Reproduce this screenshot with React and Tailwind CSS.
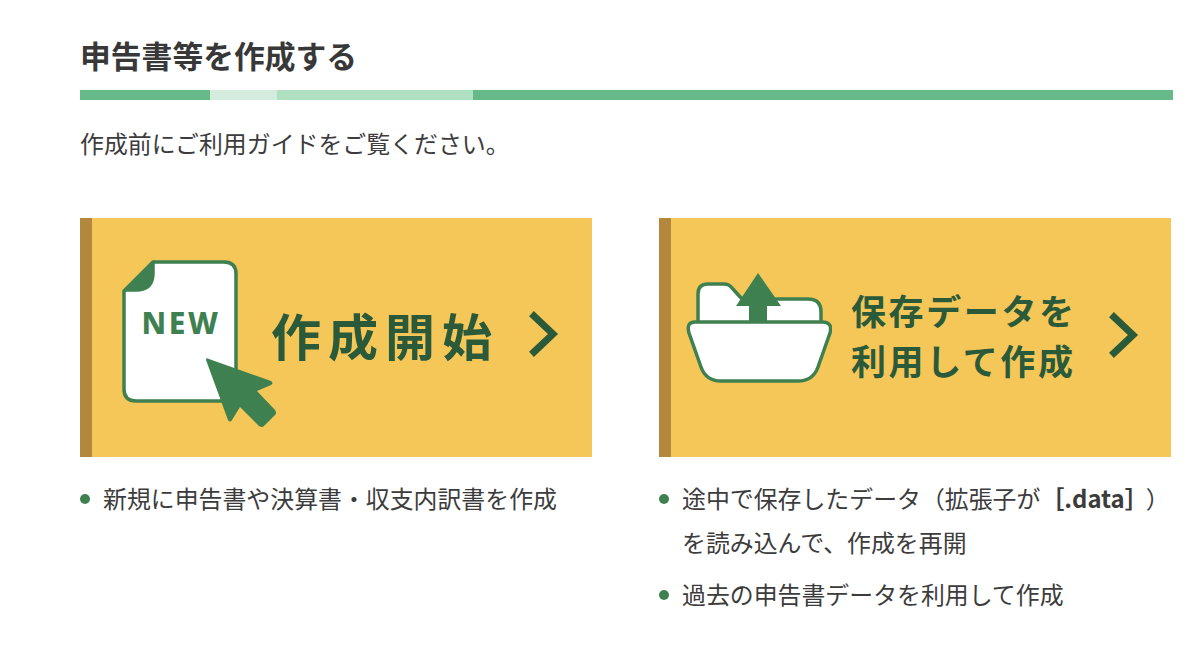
const font = { fontFamily: '"Noto Sans CJK JP", "Noto Sans", sans-serif' };

function NewIcon() {
  return (
    <svg width="156" height="172" viewBox="0 0 156 172" className="shrink-0">
      <path d="M32 3 H103 Q115 3 115 15 V130 Q115 142 103 142 H15 Q3 142 3 130 V32 Z" fill="#fff" stroke="#3f8050" strokeWidth="3.5" strokeLinejoin="round" />
      <path d="M33 2 V14 Q33 32 15 32 H3 Z" fill="#3f8050" stroke="#3f8050" strokeWidth="1.5" strokeLinejoin="round" />
      <text x="60" y="75" textAnchor="middle" fontFamily='"Noto Sans", sans-serif' fontWeight="800" fontSize="30" letterSpacing="2.5" fill="#3f8050">NEW</text>
      <path d="M88 100 L150 122 Q153 124 150 126 L136 132 L154 151 Q156 154 154 156 L143 167 Q141 169 138 167 L119 148 L111 161 Q109 164 107 161 L85 101 Q85 98 88 100 Z" fill="#3f8050" />
    </svg>
  );
}

function FolderIcon() {
  return (
    <svg width="146" height="110" viewBox="0 0 146 110" className="shrink-0">
      <path d="M12 50 V21 Q12 11 22 11 H38 Q43 11 46 15 L56 26 H122 Q135 26 135 39 V50 Z" fill="#fff" stroke="#3f8050" strokeWidth="3.5" strokeLinejoin="round" />
      <path d="M72 0 L95 33 H81 V50 H63 V33 H50 Z" fill="#3f8050" />
      <path d="M9 49 H136 Q147 49 144 60 L132 94 Q127 108 112 108 H35 Q20 108 15 94 L3 60 Q0 49 9 49 Z" fill="#fff" stroke="#3f8050" strokeWidth="3.5" strokeLinejoin="round" />
    </svg>
  );
}

function Chevron() {
  return (
    <svg width="30" height="46" viewBox="0 0 30 46" className="shrink-0">
      <path d="M5 5 L24 23 L5 41" fill="none" stroke="#2a5a3a" strokeWidth="7" strokeLinecap="square" strokeLinejoin="miter" />
    </svg>
  );
}

function Item({ children, className = "" }) {
  return (
    <li className={"flex text-[23.9px] leading-[44px] text-[#3c3c3c] " + className}>
      <span className="mt-[18px] mr-[13px] h-[10px] w-[10px] shrink-0 rounded-full bg-[#3f8050]" />
      <span>{children}</span>
    </li>
  );
}

export default function App() {
  return (
    <div style={font} className="h-[657px] w-[1200px] overflow-hidden bg-white pl-[80px] pr-[27px] pt-[33px]">
      <h2 className="text-[30.8px] font-bold leading-[44px] text-[#383838]">申告書等を作成する</h2>
      <div className="mt-[13px] flex h-[10px]">
        <div className="w-[130px] bg-[#66b988]" />
        <div className="w-[67px] bg-[#d3ecdd]" />
        <div className="w-[196px] bg-[#aee0c1]" />
        <div className="flex-1 bg-[#66b988]" />
      </div>
      <p className="mt-[25px] text-[23.9px] leading-[36px] text-[#3c3c3c]">作成前にご利用ガイドをご覧ください。</p>
      <div className="mt-[57px] flex gap-[67px]">
        <div className="w-[512px]">
          <div className="flex h-[239px] items-center border-l-[12px] border-[#b4883c] bg-[#f5c658]">
            <div className="ml-[29px] mt-[15px]"><NewIcon /></div>
            <span className="ml-[-6px] mb-[8px] text-[50px] font-bold leading-none tracking-[7px] text-[#2a5a3a]">作成開始</span>
            <div className="ml-[30px] mb-[7px]"><Chevron /></div>
          </div>
          <ul className="mt-[19px]">
            <Item>新規に申告書や決算書・収支内訳書を作成</Item>
          </ul>
        </div>
        <div className="w-[512px]">
          <div className="flex h-[239px] items-center border-l-[12px] border-[#b4883c] bg-[#f5c658]">
            <div className="ml-[15px] mt-[-20px]"><FolderIcon /></div>
            <span className="ml-[19px] mb-[6px] text-[35px] font-bold leading-[50px] tracking-[2.6px] text-[#2a5a3a]">保存データを<br />利用して作成</span>
            <div className="ml-[32px] mb-[5px]"><Chevron /></div>
          </div>
          <ul className="mt-[19px]">
            <Item>途中で保存したデータ（拡張子が<b className="mr-[9px] font-bold">［.data］</b>）<br />を読み込んで、作成を再開</Item>
            <Item className="mt-[8px]">過去の申告書データを利用して作成</Item>
          </ul>
        </div>
      </div>
    </div>
  );
}
